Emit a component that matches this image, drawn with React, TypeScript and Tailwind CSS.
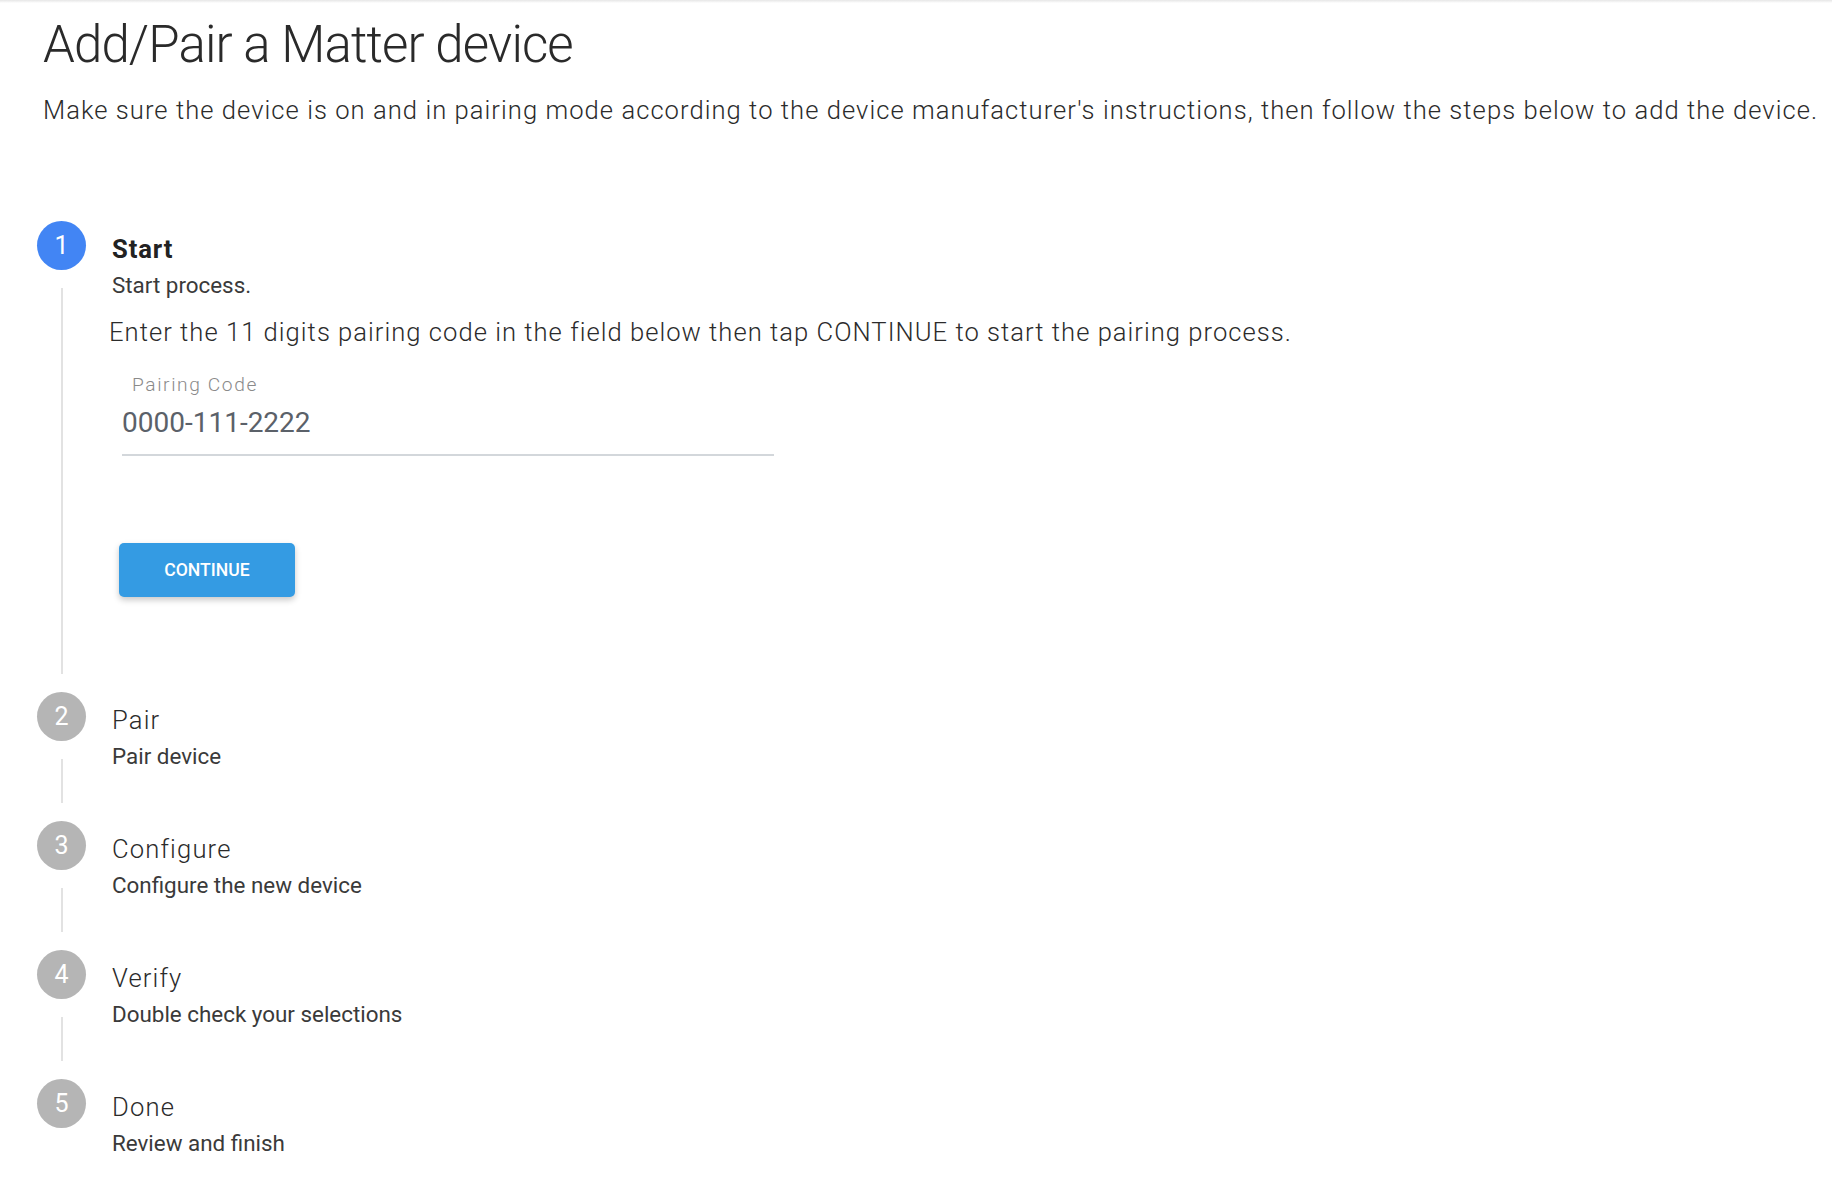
import { useState } from "react";

type Step = {
  num: number;
  title: string;
  desc: string;
};

const steps: Step[] = [
  { num: 1, title: "Start", desc: "Start process." },
  { num: 2, title: "Pair", desc: "Pair device" },
  { num: 3, title: "Configure", desc: "Configure the new device" },
  { num: 4, title: "Verify", desc: "Double check your selections" },
  { num: 5, title: "Done", desc: "Review and finish" },
];

function StartBody() {
  const [code, setCode] = useState("0000-111-2222");

  return (
    <div className="pb-[95px]">
      <p className="ml-[-3px] mt-[15px] text-[25.6px] leading-[36px] font-light tracking-[1.02px] text-[#2b2b2b]">
        Enter the 11 digits pairing code in the field below then tap CONTINUE
        to start the pairing process.
      </p>

      <div className="mt-[23px] ml-[10px] w-[652px]">
        <label className="block pl-[10px] text-[19.2px] leading-[24px] font-light tracking-[1.6px] text-[#8a8a8a]">
          Pairing Code
        </label>
        <input
          value={code}
          onChange={(e) => setCode(e.target.value)}
          className="mt-[8px] block w-full bg-transparent text-[28px] leading-[36px] text-[#5b6169] outline-none"
        />
        <div className="mt-[13px] h-[2px] bg-[#d3d7db]" />
      </div>

      <button className="mt-[87px] ml-[7px] h-[54px] w-[176px] rounded-[5px] bg-[#349be3] text-[17.6px] font-medium text-white shadow-[0_3px_6px_rgba(0,0,0,0.22)]">
        CONTINUE
      </button>
    </div>
  );
}

export default function App() {
  const active = 1;

  return (
    <div className="min-h-screen bg-white font-['Roboto',sans-serif]">
      <div className="h-[3px] bg-gradient-to-b from-[#e6e6e6] to-white" />

      <div className="pl-[43px]">
        <h1 className="mt-[11px] text-[51px] leading-[61px] font-light tracking-[-0.9px] text-[#2a2a2a]">
          Add/Pair a Matter device
        </h1>
        <p className="mt-[16px] whitespace-nowrap text-[25.6px] leading-[38px] font-light tracking-[1.04px] text-[#2b2b2b]">
          Make sure the device is on and in pairing mode according to the
          device manufacturer's instructions, then follow the steps below to
          add the device.
        </p>
      </div>

      <div className="mt-[92px] pl-[37px]">
        {steps.map((s, i) => {
          const isActive = s.num === active;
          const last = i === steps.length - 1;

          return (
            <div
              key={s.num}
              className={`flex ${!isActive && !last ? "min-h-[129px]" : ""}`}
            >
              <div className="flex w-[49px] flex-col items-center">
                <div
                  className={`flex h-[49px] w-[49px] items-center justify-center rounded-full text-[25px] text-white ${
                    isActive ? "bg-[#4285f4]" : "bg-[#b5b5b5]"
                  }`}
                >
                  {s.num}
                </div>
                {!last && (
                  <div className="my-[18px] w-[2px] flex-1 bg-[#e2e2e2]" />
                )}
              </div>

              <div className="ml-[26px] flex-1 pt-[12px]">
                <div
                  className={`text-[25.6px] leading-[32px] ${
                    isActive
                      ? "font-bold tracking-[0.9px] text-[#222]"
                      : "font-light tracking-[1.15px] text-[#2b2b2b]"
                  }`}
                >
                  {s.title}
                </div>
                <div className="mt-[6px] text-[22.4px] leading-[28px] text-[#3a3a3a]">
                  {s.desc}
                </div>
                {isActive && <StartBody />}
              </div>
            </div>
          );
        })}
      </div>
    </div>
  );
}
